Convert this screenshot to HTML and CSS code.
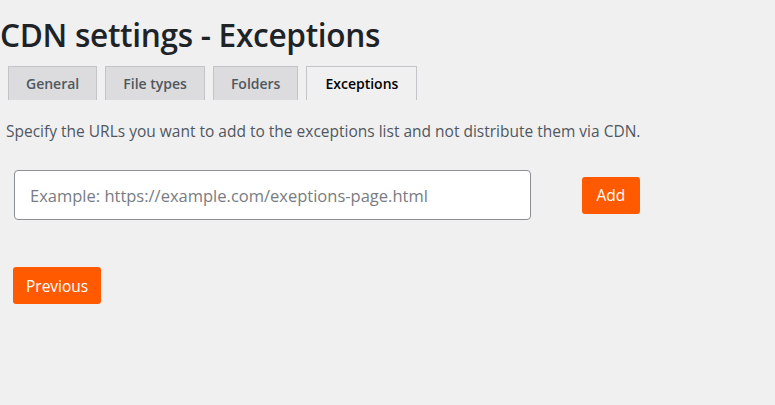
FILE: index.html
```html
<!DOCTYPE html>
<html lang="en">
<head>
<meta charset="utf-8">
<title>CDN settings - Exceptions</title>
<link rel="stylesheet" href="styles.css">
</head>
<body>
<div class="wrap">
  <h1 class="title">CDN settings - Exceptions</h1>
  <nav class="tabs">
    <a class="tab" href="#">General</a>
    <a class="tab" href="#">File types</a>
    <a class="tab" href="#">Folders</a>
    <a class="tab tab-active" href="#">Exceptions</a>
  </nav>
  <p class="desc">Specify the URLs you want to add to the exceptions list and not distribute them via CDN.</p>
  <div class="add-row">
    <input class="url-input" type="text" placeholder="Example: https://example.com/exeptions-page.html">
    <button class="btn btn-add" type="button">Add</button>
  </div>
  <div class="nav-row">
    <button class="btn btn-prev" type="button">Previous</button>
  </div>
</div>
</body>
</html>
```

FILE: styles.css
```css
html, body {
  margin: 0;
  padding: 0;
  background: #f0f0f1;
}
body {
  font-family: "Open Sans", "Noto Sans", sans-serif;
  color: #3c434a;
}
.wrap {
  padding: 0;
}
.title {
  margin: 0;
  padding-top: 13px;
  font-size: 31.6px;
  line-height: 44px;
  font-weight: 600;
  color: #1d2327;
  letter-spacing: -0.3px;
}
.tabs {
  display: flex;
  margin-top: 9px;
  padding-left: 8px;
  gap: 8px;
}
.tab {
  display: block;
  height: 34px;
  line-height: 33px;
  box-sizing: border-box;
  padding: 0 17px;
  font-size: 14px;
  font-weight: 600;
  color: #50575e;
  text-decoration: none;
  background: #dcdcde;
  border: 1px solid #c3c4c7;
  border-bottom: none;
}
.tab-active {
  background: #f0f0f1;
  color: #000;
  padding: 0 18px;
}
.desc {
  margin: 20px 0 0 6px;
  font-size: 15.5px;
  line-height: 22px;
  color: #50575e;
}
.add-row {
  display: flex;
  align-items: center;
  margin: 28px 0 0 14px;
  gap: 51px;
}
.url-input {
  width: 517px;
  height: 50px;
  box-sizing: border-box;
  border: 1px solid #8c8f94;
  border-radius: 4px;
  background: #fff;
  padding: 0 15px;
  font-family: inherit;
  font-size: 16.5px;
  color: #2c3338;
}
.url-input::placeholder {
  color: #787c82;
}
.btn {
  height: 37px;
  border: none;
  border-radius: 3px;
  background: #ff5a00;
  color: #fff;
  font-family: inherit;
  font-size: 15.5px;
  padding: 0 13px;
  cursor: pointer;
}
.btn-add {
  padding: 0 14.5px;
}
.nav-row {
  margin: 47px 0 0 13px;
}
```
